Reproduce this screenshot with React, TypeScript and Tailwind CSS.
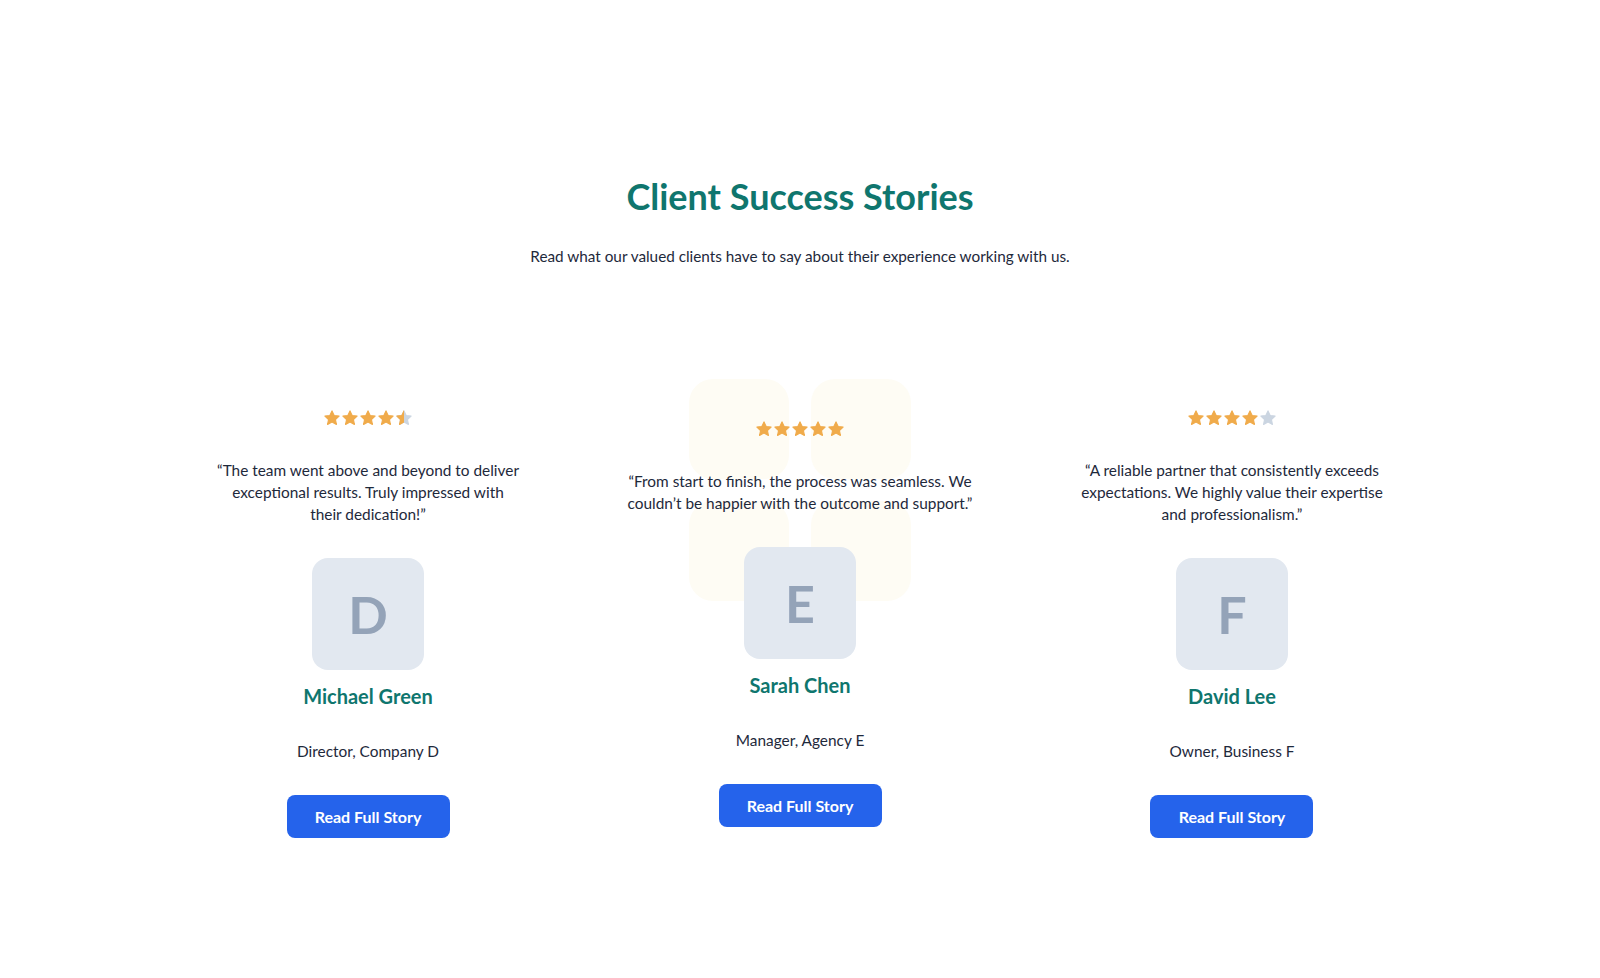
import { Fragment } from "react";

type Story = {
  rating: number;
  quote: string[];
  initial: string;
  name: string;
  role: string;
  featured?: boolean;
};

const STORIES: Story[] = [
  {
    rating: 4.5,
    quote: [
      "“The team went above and beyond to deliver",
      "exceptional results. Truly impressed with",
      "their dedication!”",
    ],
    initial: "D",
    name: "Michael Green",
    role: "Director, Company D",
  },
  {
    rating: 5,
    quote: [
      "“From start to finish, the process was seamless. We",
      "couldn’t be happier with the outcome and support.”",
    ],
    initial: "E",
    name: "Sarah Chen",
    role: "Manager, Agency E",
    featured: true,
  },
  {
    rating: 4,
    quote: [
      "“A reliable partner that consistently exceeds",
      "expectations. We highly value their expertise",
      "and professionalism.”",
    ],
    initial: "F",
    name: "David Lee",
    role: "Owner, Business F",
  },
];

const STAR_PATH =
  "M12 2.5l2.9 6.1 6.6.8-4.9 4.6 1.3 6.6L12 17.3l-5.9 3.3 1.3-6.6-4.9-4.6 6.6-.8z";

function Star({ fill }: { fill: "full" | "half" | "empty" }) {
  if (fill === "half") {
    return (
      <svg width="18" height="18" viewBox="0 0 24 24">
        <defs>
          <clipPath id="half-left">
            <rect x="0" y="0" width="12" height="24" />
          </clipPath>
        </defs>
        <path d={STAR_PATH} fill="#cbd5e1" strokeLinejoin="round" stroke="#cbd5e1" strokeWidth="1.5" />
        <path
          d={STAR_PATH}
          fill="#f0ab4b"
          stroke="#f0ab4b"
          strokeWidth="1.5"
          strokeLinejoin="round"
          clipPath="url(#half-left)"
        />
      </svg>
    );
  }
  const color = fill === "full" ? "#f0ab4b" : "#cbd5e1";
  return (
    <svg width="18" height="18" viewBox="0 0 24 24">
      <path d={STAR_PATH} fill={color} stroke={color} strokeWidth="1.5" strokeLinejoin="round" />
    </svg>
  );
}

function Stars({ rating }: { rating: number }) {
  return (
    <div className="flex items-center justify-center">
      {[1, 2, 3, 4, 5].map((i) => (
        <Fragment key={i}>
          <Star fill={rating >= i ? "full" : rating >= i - 0.5 ? "half" : "empty"} />
        </Fragment>
      ))}
    </div>
  );
}

function StoryCard({ story }: { story: Story }) {
  return (
    <div className="relative flex flex-col items-center text-center">
      {/* faint tile pattern behind the featured card */}
      {story.featured && (
        <div className="absolute left-1/2 top-[-41px] -translate-x-1/2 w-[222px] grid grid-cols-[100px_100px] gap-[22px] pointer-events-none">
          <div className="w-[100px] h-[100px] rounded-3xl bg-[#fefcf4]" />
          <div className="w-[100px] h-[100px] rounded-3xl bg-[#fefcf4]" />
          <div className="w-[100px] h-[100px] rounded-3xl bg-[#fefcf4]" />
          <div className="w-[100px] h-[100px] rounded-3xl bg-[#fefcf4]" />
        </div>
      )}
      <div className="relative flex flex-col items-center">
        <Stars rating={story.rating} />
        <p className="mt-[32px] text-[15.4px] leading-[22px] text-[#1e293b]">
          {story.quote.map((line, idx) => (
            <Fragment key={idx}>
              {idx > 0 && <br />}
              {line}
            </Fragment>
          ))}
        </p>
        <div className="mt-[33px] w-28 h-28 rounded-2xl bg-[#e2e8f0] flex items-center justify-center">
          <span className="text-[52px] font-bold text-[#94a3b8] leading-none">{story.initial}</span>
        </div>
        <h3 className="mt-[12px] text-[20px] leading-[28px] font-bold text-[#0f766e]">{story.name}</h3>
        <p className="mt-[30px] text-[15.4px] leading-[22px] text-[#1e293b]">{story.role}</p>
        <button className="mt-[33px] w-[163px] h-[43px] rounded-lg bg-[#2563eb] text-white text-[16px] font-bold">
          Read Full Story
        </button>
      </div>
    </div>
  );
}

export default function App() {
  return (
    <div className="min-h-screen bg-white font-['Lato',sans-serif]">
      <section className="pt-[174px] pb-[140px]">
        <div className="text-center">
          <h2 className="text-[36px] leading-[44px] font-bold text-[#0f766e]">Client Success Stories</h2>
          <p className="mt-[27px] text-[15.3px] leading-[22px] text-[#1e293b]">
            Read what our valued clients have to say about their experience working with us.
          </p>
        </div>
        <div className="mx-auto mt-[142px] w-[1264px] grid grid-cols-3 gap-8 items-center">
          {STORIES.map((story) => (
            <StoryCard key={story.name} story={story} />
          ))}
        </div>
      </section>
    </div>
  );
}
